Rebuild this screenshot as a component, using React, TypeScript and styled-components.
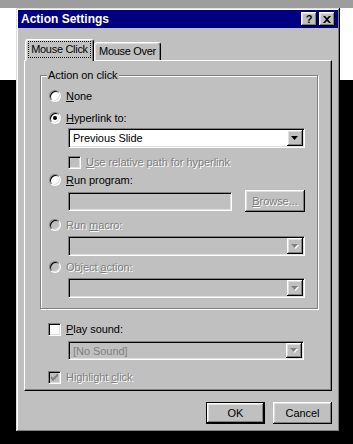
import styled, { createGlobalStyle } from 'styled-components'

const GlobalStyle = createGlobalStyle`
  html, body { margin: 0; padding: 0; }
  body { font-family: 'Liberation Sans', Arial, sans-serif; }
`

const raised = `
  box-shadow: inset -1px -1px 0 #000, inset 1px 1px 0 #fff,
    inset -2px -2px 0 #808080, inset 2px 2px 0 #dfdfdf;
`

const sunken = `
  border: 1px solid;
  border-color: #808080 #fff #fff #808080;
  box-shadow: inset 1px 1px 0 #000, inset -1px -1px 0 #dfdfdf;
`

const Desktop = styled.div`
  width: 353px;
  height: 444px;
  overflow: hidden;
  box-sizing: border-box;
  padding: 8px 0 0 16px;
  background: linear-gradient(to bottom, #9d9d9d 0 8px, #fff 8px 80px, #000 80px);
`

const Window = styled.div`
  width: 324px;
  height: 424px;
  box-sizing: border-box;
  padding: 2px;
  display: flex;
  flex-direction: column;
  background: #c0c0c0;
  color: #000;
  font-size: 11px;
  letter-spacing: -0.05px;
  box-shadow: inset -1px -1px 0 #000, inset 1px 1px 0 #dfdfdf,
    inset -2px -2px 0 #808080, inset 2px 2px 0 #fff;
`

const TitleBar = styled.div`
  height: 18px;
  display: flex;
  align-items: center;
  padding: 0 3px 0 3px;
  background: #000080;
  color: #fff;
  font-weight: bold;
  font-size: 12px;
  letter-spacing: 0;
`

const TitleText = styled.span`
  flex: 1;
`

const TitleButtons = styled.div`
  display: flex;
  gap: 2px;
`

const CaptionButton = styled.div`
  width: 16px;
  height: 14px;
  box-sizing: border-box;
  background: #c0c0c0;
  color: #000;
  display: flex;
  align-items: center;
  justify-content: center;
  font-size: 11px;
  font-weight: bold;
  line-height: 14px;
  ${raised}
`

const Body = styled.div`
  display: flex;
  flex-direction: column;
  padding: 11px 6px 0;
`

const TabStrip = styled.div`
  position: relative;
  z-index: 1;
  display: flex;
  align-items: flex-end;
  height: 22px;
  padding-left: 1px;
  margin-bottom: -1px;
`

const Tab = styled.div<{ $active?: boolean; $w: number }>`
  width: ${p => p.$w}px;
  height: ${p => (p.$active ? 22 : 18)}px;
  margin-bottom: ${p => (p.$active ? 0 : 1)}px;
  box-sizing: border-box;
  display: flex;
  align-items: center;
  justify-content: center;
  padding-bottom: ${p => (p.$active ? 2 : 0)}px;
  background: #c0c0c0;
  border-top: 1px solid #fff;
  border-left: 1px solid #fff;
  border-right: 1px solid #000;
  border-radius: 3px 3px 0 0;
  box-shadow: inset -1px 0 0 #808080, inset 1px 1px 0 #dfdfdf;
  letter-spacing: -0.3px;
`

const TabLabel = styled.span<{ $focus?: boolean }>`
  padding: 0 1px;
  line-height: 13px;
  outline: ${p => (p.$focus ? '1px dotted #000' : 'none')};
  outline-offset: 1px;
`

const Panel = styled.div`
  height: 331px;
  box-sizing: border-box;
  border: 1px solid;
  border-color: #fff #000 #000 #fff;
  box-shadow: inset -1px -1px 0 #808080;
  padding: 14px 13px 0 15px;
`

const GroupBox = styled.div`
  position: relative;
  border: 1px solid #808080;
  box-shadow: inset 1px 1px 0 #fff, 1px 1px 0 #fff;
  padding: 13px 11px 10px 8px;
`

const GroupCaption = styled.span`
  position: absolute;
  top: -7px;
  left: 6px;
  padding: 0 1px;
  line-height: 13px;
  background: #c0c0c0;
`

const Row = styled.div<{ $mt?: number; $indent?: number }>`
  display: flex;
  align-items: center;
  gap: 5px;
  height: 14px;
  margin-top: ${p => p.$mt ?? 0}px;
  margin-left: ${p => p.$indent ?? 0}px;
`

const Label = styled.span<{ $disabled?: boolean }>`
  white-space: nowrap;
  line-height: 14px;
  color: ${p => (p.$disabled ? '#808080' : '#000')};
  text-shadow: ${p => (p.$disabled ? '1px 1px 0 #fff' : 'none')};
  u { text-decoration-thickness: 1px; text-underline-offset: 1px; }
`

const RadioCircle = styled.span<{ $disabled?: boolean; $checked?: boolean }>`
  flex: none;
  width: 12px;
  height: 12px;
  box-sizing: border-box;
  border-radius: 50%;
  display: flex;
  align-items: center;
  justify-content: center;
  background: ${p => (p.$disabled ? '#c0c0c0' : '#fff')};
  border: 1px solid;
  border-color: #808080 #fff #fff #808080;
  box-shadow: inset 1px 1px 0 #000, inset -1px -1px 0 #dfdfdf;
  &::after {
    content: '';
    display: ${p => (p.$checked ? 'block' : 'none')};
    width: 4px;
    height: 4px;
    border-radius: 50%;
    background: #000;
  }
`

const CheckSquare = styled.span<{ $disabled?: boolean }>`
  flex: none;
  width: 13px;
  height: 13px;
  box-sizing: border-box;
  display: flex;
  align-items: center;
  justify-content: center;
  background: ${p => (p.$disabled ? '#c0c0c0' : '#fff')};
  ${sunken}
`

const Combo = styled.div<{ $disabled?: boolean; $mt?: number; $h?: number; $w?: number; $indent?: number }>`
  display: flex;
  align-items: stretch;
  width: ${p => p.$w ?? 237}px;
  height: ${p => p.$h ?? 20}px;
  box-sizing: border-box;
  margin: ${p => p.$mt ?? 0}px 0 0 ${p => p.$indent ?? 19}px;
  padding: 1px;
  background: ${p => (p.$disabled ? '#c0c0c0' : '#fff')};
  ${sunken}
`

const ComboText = styled.span<{ $disabled?: boolean }>`
  flex: 1;
  display: flex;
  align-items: center;
  padding-left: 3px;
  color: ${p => (p.$disabled ? '#808080' : '#000')};
`

const DropButton = styled.span`
  width: 16px;
  flex: none;
  display: flex;
  align-items: center;
  justify-content: center;
  background: #c0c0c0;
  ${raised}
`

const ProgramRow = styled.div`
  display: flex;
  align-items: center;
  justify-content: space-between;
  width: 237px;
  height: 22px;
  margin: 3px 0 0 19px;
`

const TextField = styled.div`
  width: 164px;
  height: 19px;
  box-sizing: border-box;
  background: #c0c0c0;
  ${sunken}
`

const Button = styled.div<{ $default?: boolean; $disabled?: boolean; $w?: number }>`
  width: ${p => p.$w ?? 59}px;
  height: 22px;
  box-sizing: border-box;
  display: flex;
  align-items: center;
  justify-content: center;
  background: #c0c0c0;
  color: ${p => (p.$disabled ? '#808080' : '#000')};
  text-shadow: ${p => (p.$disabled ? '1px 1px 0 #fff' : 'none')};
  border: ${p => (p.$default ? '1px solid #000' : 'none')};
  ${raised}
`

const Footer = styled.div`
  display: flex;
  justify-content: flex-end;
  gap: 8px;
  margin-top: 11px;
`

const Arrow = ({ disabled }: { disabled?: boolean }) => (
  <svg width="8" height="5" viewBox="0 0 8 5">
    {disabled && <polygon points="1,1 8,1 4.5,5" fill="#fff" />}
    <polygon points="0,0 7,0 3.5,4" fill={disabled ? '#808080' : '#000'} />
  </svg>
)

const CheckMark = ({ disabled }: { disabled?: boolean }) => (
  <svg width="7" height="7" viewBox="0 0 7 7">
    <path d="M0 2 L2 4 L7 -1 L7 2 L2 7 L0 5 Z" fill={disabled ? '#808080' : '#000'} />
  </svg>
)

const Radio = ({ label, checked, disabled, mt }: { label: React.ReactNode; checked?: boolean; disabled?: boolean; mt?: number }) => (
  <Row $mt={mt}>
    <RadioCircle $checked={checked} $disabled={disabled} />
    <Label $disabled={disabled}>{label}</Label>
  </Row>
)

const Check = ({ label, checked, disabled, mt, indent }: { label: React.ReactNode; checked?: boolean; disabled?: boolean; mt?: number; indent?: number }) => (
  <Row $mt={mt} $indent={indent}>
    <CheckSquare $disabled={disabled}>{checked && <CheckMark disabled={disabled} />}</CheckSquare>
    <Label $disabled={disabled}>{label}</Label>
  </Row>
)

const Select = ({ value, disabled, mt, h, w, indent }: { value?: string; disabled?: boolean; mt?: number; h?: number; w?: number; indent?: number }) => (
  <Combo $disabled={disabled} $mt={mt} $h={h} $w={w} $indent={indent}>
    <ComboText $disabled={disabled}>{value}</ComboText>
    <DropButton><Arrow disabled={disabled} /></DropButton>
  </Combo>
)

export default function App() {
  return (
    <Desktop>
      <GlobalStyle />
      <Window>
        <TitleBar>
          <TitleText>Action Settings</TitleText>
          <TitleButtons>
            <CaptionButton>?</CaptionButton>
            <CaptionButton>
              <svg width="8" height="7" viewBox="0 0 8 7">
                <path d="M0 0 L2 0 L4 2 L6 0 L8 0 L5 3.5 L8 7 L6 7 L4 5 L2 7 L0 7 L3 3.5 Z" fill="#000" />
              </svg>
            </CaptionButton>
          </TitleButtons>
        </TitleBar>
        <Body>
          <TabStrip>
            <Tab $active $w={69}><TabLabel $focus>Mouse Click</TabLabel></Tab>
            <Tab $w={67}><TabLabel>Mouse Over</TabLabel></Tab>
          </TabStrip>
          <Panel>
            <GroupBox>
              <GroupCaption>Action on click</GroupCaption>
              <Radio label={<><u>N</u>one</>} />
              <Radio mt={8} checked label={<><u>H</u>yperlink to:</>} />
              <Select mt={3} value="Previous Slide" />
              <Check mt={7} indent={19} disabled label={<><u>U</u>se relative path for hyperlink</>} />
              <Radio mt={4} label={<><u>R</u>un program:</>} />
              <ProgramRow>
                <TextField />
                <Button $disabled $w={60}><span><u>B</u>rowse...</span></Button>
              </ProgramRow>
              <Radio mt={6} disabled label={<>Run <u>m</u>acro:</>} />
              <Select mt={4} disabled />
              <Radio mt={4} disabled label={<>Object <u>a</u>ction:</>} />
              <Select mt={4} disabled />
            </GroupBox>
            <Check mt={13} indent={8} label={<><u>P</u>lay sound:</>} />
            <Select mt={5} h={19} w={236} indent={28} disabled value="[No Sound]" />
            <Check mt={10} indent={8} checked disabled label={<>Highlight <u>c</u>lick</>} />
          </Panel>
          <Footer>
            <Button $default>OK</Button>
            <Button>Cancel</Button>
          </Footer>
        </Body>
      </Window>
    </Desktop>
  )
}
